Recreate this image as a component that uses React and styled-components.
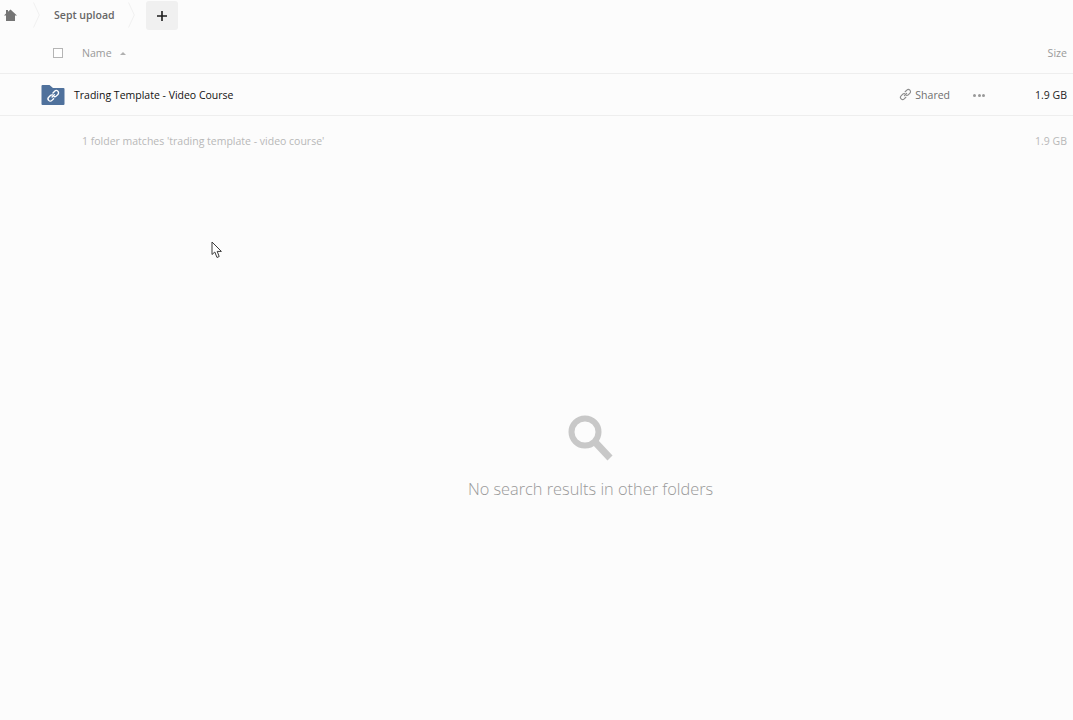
import React from 'react';
import styled, { createGlobalStyle } from 'styled-components';

const GlobalStyle = createGlobalStyle`
  html, body {
    margin: 0;
    padding: 0;
    height: 100%;
    background: #fcfcfc;
    font-family: 'Open Sans', 'Liberation Sans', sans-serif;
    overflow: hidden;
  }
`;

function ChevronSep() {
  return (
    <Sep viewBox="0 0 7 26" aria-hidden="true">
      <path d="M0.5 0.5 L6.3 13 L0.5 25.5" fill="none" stroke="#f0f0f0" strokeWidth="1" />
    </Sep>
  );
}

const linkPaths = (
  <>
    <path d="M6.6 9.4 L9.4 6.6" />
    <path d="M7.6 4.6 L9.6 2.6 a2.6 2.6 0 0 1 3.8 3.8 L11.4 8.4 a2.6 2.6 0 0 1 -2.6 .6" />
    <path d="M8.4 11.4 L6.4 13.4 a2.6 2.6 0 0 1 -3.8 -3.8 L4.6 7.6 a2.6 2.6 0 0 1 2.6 -.6" />
  </>
);

function App() {
  return (
    <Page>
      <GlobalStyle />
      <Breadcrumbs>
        <HomeCrumb>
          <svg width="13" height="12" viewBox="0 0 13 12" aria-hidden="true">
            <path d="M6.5 0.5 L13 6.5 L11 6.5 L11 12 L2 12 L2 6.5 L0 6.5 L2 4.6 L2 1 L4 1 L4 2.8 Z" fill="#757575" />
          </svg>
        </HomeCrumb>
        <ChevronSep />
        <Crumb>Sept upload</Crumb>
        <ChevronSep />
        <AddButton>
          <svg width="10" height="10" viewBox="0 0 10 10" aria-hidden="true">
            <path d="M5 0 V10 M0 5 H10" stroke="#1c1c1c" strokeWidth="1.6" />
          </svg>
        </AddButton>
      </Breadcrumbs>

      <HeaderRow>
        <CheckCell>
          <Checkbox />
        </CheckCell>
        <NameHead>
          Name
          <SortCaret />
        </NameHead>
        <SizeHead>Size</SizeHead>
      </HeaderRow>

      <FileRow>
        <FolderCell>
          <svg width="24" height="20" viewBox="0 0 24 20" aria-hidden="true">
            <path d="M0.5 1 Q0.5 0 1.5 0 L8.5 0 L12 3 L22.5 3 Q23.5 3 23.5 4 L23.5 19 Q23.5 20 22.5 20 L1.5 20 Q0.5 20 0.5 19 Z" fill="#4f719c" />
            <g transform="translate(5.5 4) scale(0.85)" fill="none" stroke="#ffffff" strokeWidth="1.6" strokeLinecap="round">
              {linkPaths}
            </g>
          </svg>
        </FolderCell>
        <FileName>Trading Template - Video Course</FileName>
        <SharedAction>
          <svg width="13" height="13" viewBox="0 0 16 16" aria-hidden="true">
            <g fill="none" stroke="#8c8c8c" strokeWidth="1.4" strokeLinecap="round">
              {linkPaths}
            </g>
          </svg>
          Shared
        </SharedAction>
        <MoreAction>
          <Dot />
          <Dot />
          <Dot />
        </MoreAction>
        <FileSize>1.9 GB</FileSize>
      </FileRow>

      <SummaryRow>
        <SummaryText>1 folder matches 'trading template - video course'</SummaryText>
        <SummarySize>1.9 GB</SummarySize>
      </SummaryRow>

      <EmptyState>
        <svg width="46" height="47" viewBox="0 0 46 47" aria-hidden="true">
          <circle cx="17" cy="17" r="13.5" fill="none" stroke="#c8c8c8" strokeWidth="6" />
          <path d="M27 27 L42 43" stroke="#c8c8c8" strokeWidth="7" strokeLinecap="butt" />
        </svg>
        <EmptyText>No search results in other folders</EmptyText>
      </EmptyState>

      <Cursor width="12" height="18" viewBox="0 0 12 18" aria-hidden="true">
        <path d="M1 1 L1 13.5 L3.8 11 L6 16.5 L8.2 15.5 L6.2 10.4 L10.4 10.4 Z" fill="#ffffff" stroke="#3a3a3a" strokeWidth="1" />
      </Cursor>
    </Page>
  );
}

const Page = styled.div`
  position: relative;
  width: 1073px;
  height: 720px;
  overflow: hidden;
  background: #fcfcfc;
  color: #222;
`;

const Breadcrumbs = styled.div`
  display: flex;
  align-items: center;
  height: 31px;
`;

const HomeCrumb = styled.div`
  display: flex;
  align-items: center;
  padding: 0 0 1px 4px;
  width: 33px;
  height: 30px;
  box-sizing: border-box;
`;

const Sep = styled.svg`
  width: 7px;
  height: 26px;
  margin-bottom: 2px;
  flex: none;
`;

const Crumb = styled.div`
  padding: 0 0 2px 14px;
  width: 88px;
  box-sizing: border-box;
  font-size: 10.55px;
  font-weight: 600;
  color: #666;
  white-space: nowrap;
`;

const AddButton = styled.div`
  display: flex;
  align-items: center;
  justify-content: center;
  width: 32px;
  height: 29px;
  margin: 0 0 1px 11px;
  padding-top: 2px;
  box-sizing: border-box;
  background: #f0f0f0;
  border-radius: 3px;
`;

const HeaderRow = styled.div`
  display: flex;
  align-items: center;
  height: 43px;
  padding: 2px 6px 0 0;
  box-sizing: border-box;
  border-bottom: 1px solid #eeeeee;
`;

const CheckCell = styled.div`
  display: flex;
  justify-content: flex-end;
  width: 63px;
`;

const Checkbox = styled.div`
  width: 8px;
  height: 8px;
  border: 1px solid #b5b5b5;
  background: #fff;
`;

const NameHead = styled.div`
  display: flex;
  align-items: center;
  flex: 1;
  margin-left: 19px;
  font-size: 10.6px;
  color: #999;
`;

const SortCaret = styled.span`
  width: 0;
  height: 0;
  margin: 0 0 0 8px;
  border-left: 3px solid transparent;
  border-right: 3px solid transparent;
  border-bottom: 3px solid #b0b0b0;
`;

const SizeHead = styled.div`
  font-size: 10.6px;
  color: #999;
`;

const FileRow = styled.div`
  display: flex;
  align-items: center;
  height: 42px;
  box-sizing: border-box;
  border-bottom: 1px solid #eeeeee;
  padding-right: 6px;
`;

const FolderCell = styled.div`
  display: flex;
  align-items: center;
  width: 74px;
  padding: 0 0 0 41px;
  box-sizing: border-box;
`;

const FileName = styled.div`
  flex: 1;
  font-size: 10.5px;
  color: #111;
`;

const SharedAction = styled.div`
  display: flex;
  align-items: center;
  gap: 3px;
  font-size: 10.5px;
  color: #6e6e6e;
`;

const MoreAction = styled.div`
  display: flex;
  gap: 1.5px;
  margin: 2px 0 0 23px;
`;

const Dot = styled.span`
  width: 3px;
  height: 3px;
  border-radius: 50%;
  background: #999;
`;

const FileSize = styled.div`
  width: 82px;
  font-size: 10.5px;
  font-weight: 500;
  color: #222;
  text-align: right;
`;

const SummaryRow = styled.div`
  display: flex;
  align-items: center;
  justify-content: space-between;
  height: 50px;
  padding: 0 6px 0 82px;
`;

const SummaryText = styled.div`
  font-size: 10.5px;
  color: #b8b8b8;
`;

const SummarySize = styled.div`
  font-size: 10.5px;
  color: #b8b8b8;
`;

const EmptyState = styled.div`
  display: flex;
  flex-direction: column;
  align-items: center;
  margin: 249px 0 0 108px;
  gap: 16px;
`;

const EmptyText = styled.div`
  font-size: 16.35px;
  font-weight: 300;
  color: #999;
  white-space: nowrap;
`;

const Cursor = styled.svg`
  position: absolute;
  left: 211px;
  top: 241px;
`;

export default App;
